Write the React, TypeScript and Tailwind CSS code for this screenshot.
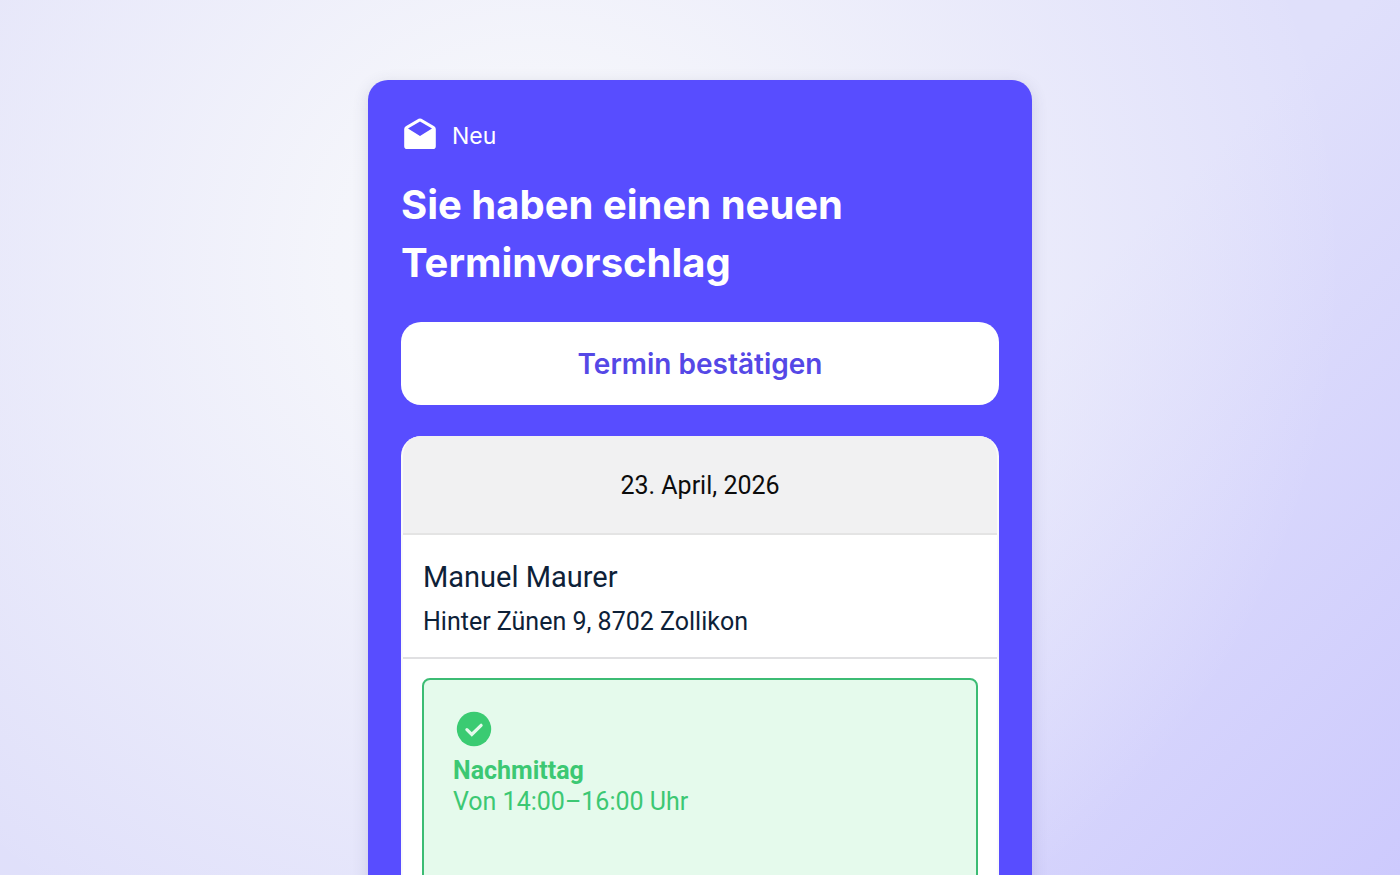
import React from 'react';

interface Appointment {
  date: string;
  name: string;
  address: string;
  slot: string;
  time: string;
}

const appointment: Appointment = {
  date: '23. April, 2026',
  name: 'Manuel Maurer',
  address: 'Hinter Zünen 9, 8702 Zollikon',
  slot: 'Nachmittag',
  time: 'Von 14:00–16:00 Uhr',
};

const OpenMailIcon: React.FC = () => (
  <svg viewBox="0 0 32 32" className="h-8 w-8" fill="currentColor" aria-hidden="true">
    <path
      fillRule="evenodd"
      d="M14.6 0.8a2.8 2.8 0 0 1 2.8 0l12.8 7.4A3.2 3.2 0 0 1 31.8 11v17.2a2.8 2.8 0 0 1-2.8 2.8H3a2.8 2.8 0 0 1-2.8-2.8V11a3.2 3.2 0 0 1 1.6-2.8zM16 3.6 4 10.6 16 18l12-7.4z"
    />
  </svg>
);

const CheckCircleIcon: React.FC = () => (
  <svg viewBox="0 0 36 36" className="h-9 w-9" fill="none" aria-hidden="true">
    <circle cx="18" cy="18" r="17.2" fill="#3acb72" />
    <path
      d="M10.9 18.7l4.9 4.7 9.3-9.1"
      stroke="#e5faec"
      strokeWidth="3.2"
      strokeLinecap="round"
      strokeLinejoin="miter"
    />
  </svg>
);

const AppointmentCard: React.FC<{ appointment: Appointment }> = ({ appointment }) => {
  return (
    <section className="flex grow flex-col overflow-hidden rounded-t-[20px] border-x-2 border-[#fafafa] bg-white font-[Roboto,sans-serif]">
      <div className="border-b-2 border-[#e4e4e4] bg-[#f1f1f2] pt-[33px] pb-[31px] text-center text-[25px] leading-[33px] text-[#0c0c0c]">
        {appointment.date}
      </div>
      <div className="border-b-2 border-[#e0e0e2] px-5 pt-6 pb-[19px] text-[#0d2138]">
        <h2 className="text-[29px] leading-[36px]">{appointment.name}</h2>
        <p className="mt-[10px] text-[25px] leading-[33px]">{appointment.address}</p>
      </div>
      <div className="flex grow flex-col px-[19px] pt-[19px]">
        <div className="grow rounded-lg border-2 border-[#3cbc74] bg-[#e5faec] px-[29px] pt-[31px] text-[25px] leading-[31px] text-[#3cc873]">
          <div className="mb-2 px-[3px]">
            <CheckCircleIcon />
          </div>
          <p className="font-bold">{appointment.slot}</p>
          <p>{appointment.time}</p>
        </div>
      </div>
    </section>
  );
};

const App: React.FC = () => {
  return (
    <div className="flex h-screen justify-center overflow-hidden bg-[radial-gradient(ellipse_58%_90%_at_38%_30%,#f7f8fb_0%,#f6f7fbe6_25%,#f6f7fb00_100%),linear-gradient(135deg,#e0e0f9_0%,#e0e0fb_60%,#cdcafd_100%)] pt-20">
      <main className="flex h-[1100px] w-full max-w-[664px] shrink-0 flex-col rounded-[20px] bg-[#584dff] px-[33px] pt-[38px] font-[Inter,sans-serif] shadow-[0_4px_16px_rgba(60,60,100,0.16)]">
        <div className="flex items-start gap-4 px-[3px] text-white">
          <OpenMailIcon />
          <span className="text-[23px] leading-[36px]">Neu</span>
        </div>
        <h1 className="mt-[22px] text-[40px] leading-[58px] font-bold text-white">
          Sie haben einen neuen Terminvorschlag
        </h1>
        <button
          type="button"
          className="mt-[30px] mb-[31px] h-[83px] w-full shrink-0 rounded-[20px] bg-white text-[28px] font-semibold text-[#5548e6]"
        >
          Termin bestätigen
        </button>
        <AppointmentCard appointment={appointment} />
      </main>
    </div>
  );
};

export default App;
